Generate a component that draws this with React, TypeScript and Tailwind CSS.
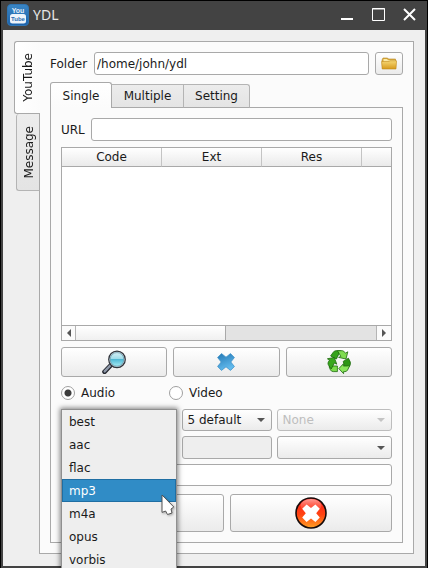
import React, { useState } from "react";

const edge = "border border-[#a9a9a9] rounded-[3px]";
const raised = `${edge} bg-linear-to-b from-white to-[#ebebeb]`;
const field = `${edge} bg-white min-w-0 px-[2px] outline-none`;

function YouTubeIcon() {
  return (
    <svg viewBox="0 0 22 22" className="size-[22px]" aria-hidden="true">
      <defs>
        <linearGradient id="yt" x1="0" y1="0" x2="0" y2="1">
          <stop offset="0" stopColor="#3a86c4" />
          <stop offset="1" stopColor="#1b62ac" />
        </linearGradient>
      </defs>
      <rect x="0.5" y="0.5" width="21" height="21" rx="3.5" fill="url(#yt)" stroke="#2f74b2" />
      <rect x="3" y="10" width="16" height="9.5" rx="2.5" fill="#eef4fa" />
      <text x="11" y="8.5" textAnchor="middle" fontFamily="Liberation Sans, sans-serif" fontSize="7" fontWeight="bold" fill="#e4eef8">You</text>
      <text x="11" y="17" textAnchor="middle" fontFamily="Liberation Sans, sans-serif" fontSize="6" fontWeight="bold" fill="#2a6cb0">Tube</text>
    </svg>
  );
}

function FolderIcon() {
  return (
    <svg viewBox="0 0 16 13" className="h-[13px] w-4" aria-hidden="true">
      <defs>
        <linearGradient id="fo" x1="0" y1="0" x2="0" y2="1">
          <stop offset="0" stopColor="#f6d774" />
          <stop offset="1" stopColor="#d79a1c" />
        </linearGradient>
      </defs>
      <path d="M1 3 L2 1 H6.5 L7.5 2 H14.5 V10 L1.5 11.5 Z" fill="#d8a83c" stroke="#b98a25" strokeWidth="0.6" />
      <path d="M2.5 2 H6 L7 3.2 H14 V5 H2.5 Z" fill="#fbe9a4" />
      <path d="M0.6 4.5 H8 L9 3.8 H15.6 L15 12 H1.2 Z" fill="url(#fo)" stroke="#c18c1c" strokeWidth="0.6" />
    </svg>
  );
}

function MagnifierIcon() {
  return (
    <svg viewBox="0 0 24 24" className="size-6" aria-hidden="true">
      <defs>
        <linearGradient id="lens" x1="0" y1="0" x2="0" y2="1">
          <stop offset="0" stopColor="#d6f0f6" />
          <stop offset="0.45" stopColor="#9fdcea" />
          <stop offset="0.5" stopColor="#4fb8d4" />
          <stop offset="1" stopColor="#a6ecf4" />
        </linearGradient>
      </defs>
      <path d="M2.5 21.8 L9 15" stroke="#23262e" strokeWidth="4.6" strokeLinecap="round" />
      <path d="M2.7 21.4 L8.5 15.2" stroke="#8d97a8" strokeWidth="2.4" strokeLinecap="round" />
      <circle cx="15" cy="9.4" r="8.3" fill="#c9d2da" stroke="#30343b" strokeWidth="1.2" />
      <circle cx="15" cy="9.4" r="6.8" fill="url(#lens)" stroke="#5d98ab" strokeWidth="0.7" />
    </svg>
  );
}

function BlueCrossIcon() {
  return (
    <svg viewBox="0 0 18 18" className="size-[18px]" aria-hidden="true">
      <defs>
        <linearGradient id="bx" x1="0" y1="0" x2="0.4" y2="1">
          <stop offset="0" stopColor="#2478b4" />
          <stop offset="1" stopColor="#62bbee" />
        </linearGradient>
      </defs>
      <path d="M4.5 0.6 L9 4.2 L13.5 0.6 L17.4 4.5 L13.8 9 L17.4 13.5 L13.5 17.4 L9 13.8 L4.5 17.4 L0.6 13.5 L4.2 9 L0.6 4.5 Z" fill="url(#bx)" stroke="#3f92c8" strokeWidth="0.8" strokeLinejoin="round" />
    </svg>
  );
}

function RecycleIcon() {
  return (
    <svg viewBox="0 0 24 24" className="size-6" aria-hidden="true">
      <g stroke="#1c6a0b" strokeWidth="0.8" strokeLinejoin="round">
        <path d="M6 2.6 Q7 0.7 9 0.7 H13.5 L9.4 9 L3.6 6 Z" fill="#35a31b" />
        <path d="M10.4 0.7 H15.4 Q16.8 0.8 17.6 2.2 L18.4 3.2 L20.8 1.8 L19 9 L11.6 7.4 L13.8 6.4 L12.2 3.6 Z" fill="#7fdc50" />
        <path d="M16.2 11.4 L21.4 8.2 L23.2 11.8 Q23.9 13.6 23 15.2 L21 18.2 L17.6 16.6 Z" fill="#2d9616" />
        <path d="M22.8 15.6 L20.6 20 Q19.8 21.6 18 21.6 H16.6 V23.7 L11.8 18.6 L16.4 13.8 V16 H20 Z" fill="#8ae65c" />
        <path d="M4 16 H10.4 V21.6 H6.2 Q4.3 21.6 3.4 19.8 L2 16.6 Z" fill="#7bdc4c" />
        <path d="M0.4 8.8 L7.2 7.4 L9.8 14.2 L7.4 13.1 L4.2 19 L1.3 14.8 Q0.6 13.2 1.4 11.8 L2.6 10 Z" fill="#39a81e" />
      </g>
    </svg>
  );
}

function RedCrossIcon() {
  return (
    <svg viewBox="0 0 32 32" className="size-8" aria-hidden="true">
      <defs>
        <linearGradient id="rb" x1="0" y1="0" x2="0" y2="1">
          <stop offset="0" stopColor="#ff1d1d" />
          <stop offset="0.55" stopColor="#ff4312" />
          <stop offset="1" stopColor="#ffa024" />
        </linearGradient>
        <linearGradient id="rs" x1="0" y1="0" x2="0" y2="1">
          <stop offset="0" stopColor="#ffa098" />
          <stop offset="1" stopColor="#ff5a40" stopOpacity="0.2" />
        </linearGradient>
      </defs>
      <circle cx="16" cy="16" r="15" fill="url(#rb)" stroke="#160b0b" strokeWidth="1.6" />
      <ellipse cx="16" cy="8.5" rx="10.5" ry="6.5" fill="url(#rs)" />
      <path d="M11.6 7.4 L16 11 L20.4 7.4 L24.8 11.8 L21.2 16.2 L24.8 20.6 L20.4 25 L16 21.4 L11.6 25 L7.2 20.6 L10.8 16.2 L7.2 11.8 Z" fill="#fff" />
    </svg>
  );
}

function TitleBar() {
  return (
    <header className="flex h-[29px] items-center gap-[4px] bg-[#434343] pr-[10px] pb-[2px] pl-[6px] text-[#e6e6e6]">
      <YouTubeIcon />
      <h1 className="flex-1 font-['Noto_Sans','Open_Sans',sans-serif] text-[14px] leading-[20px]">YDL</h1>
      <div className="flex gap-[16px] text-white">
        <button type="button" aria-label="Minimize" className="size-[15px]">
          <svg viewBox="0 0 15 15" className="size-[15px]"><path d="M1 12 H13" stroke="currentColor" strokeWidth="2" /></svg>
        </button>
        <button type="button" aria-label="Maximize" className="size-[15px]">
          <svg viewBox="0 0 15 15" className="size-[15px]"><path d="M1.5 13.5 V1.5 H13.5 V13.5 Z M1 2 H14" fill="none" stroke="currentColor" /></svg>
        </button>
        <button type="button" aria-label="Close" className="size-[15px]">
          <svg viewBox="0 0 15 15" className="size-[15px]"><path d="M2 2 L13 13 M13 2 L2 13" stroke="currentColor" strokeWidth="2" /></svg>
        </button>
      </div>
    </header>
  );
}

function Arrow({ dim = false }: { dim?: boolean }) {
  return (
    <svg viewBox="0 0 8 4" aria-hidden="true" className={`pointer-events-none absolute top-1/2 right-[7px] h-1 w-2 -translate-y-1/2 ${dim ? "text-[#c4c4c4]" : "text-[#555]"}`}>
      <path d="M0 0 H8 L4 4 Z" fill="currentColor" />
    </svg>
  );
}

function Combo({ label, value, disabled = false }: { label: string; value: string; disabled?: boolean }) {
  return (
    <div className="relative min-w-0">
      <select aria-label={label} disabled={disabled} className={`${raised} block h-full w-full appearance-none px-[5px] leading-[20px] disabled:border-[#bdbdbd] disabled:text-[#bebebe] disabled:opacity-100`}>
        <option>{value}</option>
      </select>
      <Arrow dim={disabled} />
    </div>
  );
}

const formats = ["best", "aac", "flac", "mp3", "m4a", "opus", "vorbis"];

function FormatPicker() {
  const [current, setCurrent] = useState("mp3");
  return (
    <div className="relative min-w-0">
      <button type="button" aria-haspopup="listbox" aria-expanded="true" aria-label="Audio format" className={`${raised} block h-full w-full`} />
      <ul role="listbox" aria-label="Audio formats" className="absolute inset-x-0 top-0 z-10 border border-[#8f8f8f] bg-[#eee] shadow-[0_0_5px_1px_rgba(0,0,0,0.5)]">
        {formats.map((f) => (
          <li key={f} role="option" aria-selected={f === current} onMouseEnter={() => setCurrent(f)} className="h-[23px] border border-transparent px-[6px] leading-[22px] aria-selected:border-[#1f6ea3] aria-selected:bg-[#308cc6] aria-selected:text-white">
            {f}
          </li>
        ))}
      </ul>
      <svg viewBox="0 0 14 22" aria-hidden="true" className="pointer-events-none absolute top-[85px] right-[2px] z-20 h-[22px] w-[14px] drop-shadow-[1px_1px_1px_rgba(0,0,0,0.3)]">
        <path d="M1 1 L12.8 13 L10 15 L11 19 L6.5 20.5 L4.6 17 L1 18.4 Z" fill="#fff" stroke="#555" strokeLinejoin="round" />
      </svg>
    </div>
  );
}

function MediaRadio({ label, checked = false }: { label: string; checked?: boolean }) {
  return (
    <label className="flex w-[108px] items-center gap-[6px] leading-[16px]">
      <input type="radio" name="media" defaultChecked={checked} className="size-[14px] appearance-none rounded-full border border-[#a0a0a0] bg-white checked:bg-[radial-gradient(circle,#3c3c3c_3px,#fff_4px)]" />
      {label}
    </label>
  );
}

function FormatTable() {
  return (
    <div className="flex min-h-[194px] flex-1 flex-col border border-[#a9a9a9] bg-white">
      <table className="w-full table-fixed border-separate border-spacing-0">
        <thead>
          <tr className="h-[19px] bg-linear-to-b from-white to-[#e9e9e9]">
            {["Code", "Ext", "Res"].map((h) => (
              <th key={h} scope="col" className="h-[19px] w-[100px] border-r border-b border-r-[#c4c4c4] border-b-[#a9a9a9] p-0 text-center leading-[18px] font-normal">{h}</th>
            ))}
            <td className="border-b border-[#a9a9a9] p-0" />
          </tr>
        </thead>
      </table>
      <div className="mt-auto flex h-[15px] border-t border-[#a9a9a9] bg-[#e3e3e3] text-[#555]">
        <button type="button" aria-label="Scroll left" className="flex w-[14px] items-center justify-center border-r border-[#b5b5b5] bg-[#fbfbfb]">
          <svg viewBox="0 0 4 8" className="h-2 w-1"><path d="M4 0 V8 L0 4 Z" fill="currentColor" /></svg>
        </button>
        <div className="flex-1">
          <div className="h-full w-1/2 border-r border-[#a9a9a9] bg-linear-to-b from-white to-[#f0f0f0]" />
        </div>
        <button type="button" aria-label="Scroll right" className="flex w-[15px] items-center justify-center border-l border-[#b5b5b5] bg-[#fbfbfb]">
          <svg viewBox="0 0 4 8" className="h-2 w-1"><path d="M0 0 V8 L4 4 Z" fill="currentColor" /></svg>
        </button>
      </div>
    </div>
  );
}

function SinglePage() {
  return (
    <section role="tabpanel" aria-label="Single" className="flex flex-1 flex-col border border-[#a9a9a9] bg-[#fbfbfb] p-[10px]">
      <div className="flex items-center gap-[6px]">
        <label htmlFor="url">URL</label>
        <input id="url" type="text" className={`${field} h-[23px] flex-1`} />
      </div>
      <div className="mt-[6px] flex flex-1 flex-col">
        <FormatTable />
      </div>
      <div className="mt-[6px] grid h-[30px] grid-cols-3 gap-[6px]">
        <button type="button" aria-label="Search" className={`${raised} flex items-center justify-center`}><MagnifierIcon /></button>
        <button type="button" aria-label="Clear" className={`${raised} flex items-center justify-center`}><BlueCrossIcon /></button>
        <button type="button" aria-label="Reset" className={`${raised} flex items-center justify-center`}><RecycleIcon /></button>
      </div>
      <div className="mt-[8px] flex h-[16px]">
        <MediaRadio label="Audio" checked />
        <MediaRadio label="Video" />
      </div>
      <div className="mt-[8px] grid h-[22px] grid-cols-[1fr_90px_1fr] gap-[5px]">
        <FormatPicker />
        <Combo label="Quality" value="5 default" />
        <Combo label="Subtitles" value="None" disabled />
      </div>
      <div className="mt-[5px] grid h-[23px] grid-cols-[1fr_90px_1fr] gap-[5px]">
        <input type="text" aria-label="Start" className={field} />
        <input type="text" aria-label="Language" disabled className={`${edge} min-w-0 bg-[#eee]`} />
        <Combo label="Container" value="" />
      </div>
      <input type="text" aria-label="Options" className={`${field} mt-[5px] h-[22px]`} />
      <div className="mt-[8px] grid h-[38px] grid-cols-2 gap-[6px]">
        <button type="button" aria-label="Download" className={raised} />
        <button type="button" aria-label="Cancel" className={`${raised} flex items-center justify-center`}><RedCrossIcon /></button>
      </div>
    </section>
  );
}

const idleTab = "border border-[#b4b4b4] bg-linear-to-b from-[#ececec] to-[#e4e4e4]";

export default function App() {
  return (
    <div className="flex min-h-screen flex-col overflow-hidden border border-black bg-[#434343] font-['DejaVu_Sans',sans-serif] text-[12px] leading-[16px] text-[#1a1a1a]">
      <TitleBar />
      <main className="mx-[2px] mb-[2px] flex flex-1 bg-[#efefef] pt-[11px] pr-[11px] pb-[12px] pl-[11px]">
        <div role="tablist" aria-orientation="vertical" className="z-10 -mr-px flex w-[26px] flex-col items-end">
          <button type="button" role="tab" aria-selected="true" className="flex h-[73px] w-full items-center justify-center rounded-l-[3px] border border-r-0 border-[#a9a9a9] bg-linear-to-r from-white to-[#fbfbfb]">
            <span className="rotate-180 [writing-mode:vertical-rl]">YouTube</span>
          </button>
          <button type="button" role="tab" aria-selected="false" className={`${idleTab} flex h-[77px] w-[24px] items-center justify-end rounded-l-[3px] border-t-0 border-r-[#a9a9a9] pr-[2px]`}>
            <span className="rotate-180 [writing-mode:vertical-rl]">Message</span>
          </button>
        </div>
        <section role="tabpanel" aria-label="YouTube" className="flex min-w-0 flex-1 flex-col border border-[#a9a9a9] bg-[#fbfbfb] p-[10px]">
          <div className="flex h-[23px] items-center gap-[6px]">
            <label htmlFor="folder" className="w-[38px]">Folder</label>
            <input id="folder" type="text" defaultValue="/home/john/ydl" className={`${field} h-full flex-1`} />
            <button type="button" aria-label="Choose folder" className={`${raised} flex h-full w-[28px] items-center justify-center`}><FolderIcon /></button>
          </div>
          <div role="tablist" className="z-10 mt-[7px] -mb-px flex h-[26px] items-end">
            <button type="button" role="tab" aria-selected="true" className="h-full w-[62px] rounded-t-[3px] border border-b-0 border-[#a9a9a9] bg-linear-to-b from-white to-[#fbfbfb]">Single</button>
            <button type="button" role="tab" aria-selected="false" className={`${idleTab} h-[24px] w-[72px] border-b-[#a9a9a9] border-l-0`}>Multiple</button>
            <button type="button" role="tab" aria-selected="false" className={`${idleTab} h-[24px] w-[66px] rounded-tr-[3px] border-b-[#a9a9a9] border-l-0`}>Setting</button>
          </div>
          <SinglePage />
        </section>
      </main>
    </div>
  );
}
